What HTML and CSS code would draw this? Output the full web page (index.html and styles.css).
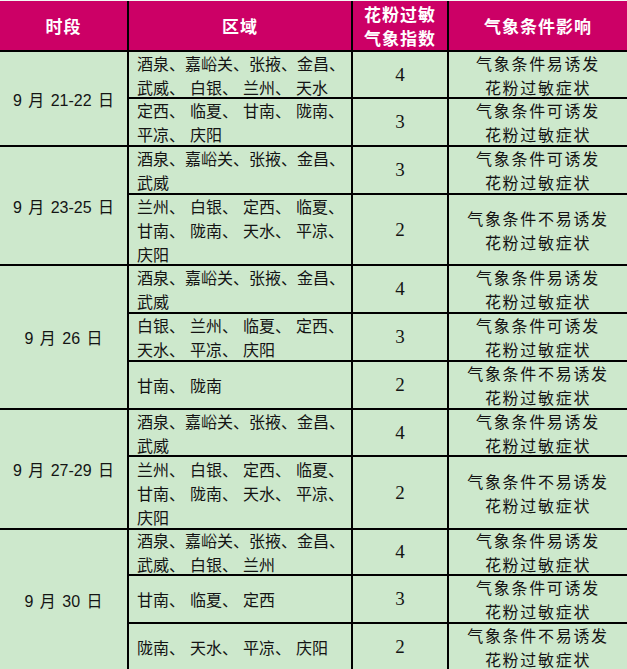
FILE: index.html
```html
<!DOCTYPE html>
<html lang="zh">
<head>
<meta charset="utf-8">
<link rel="stylesheet" href="styles.css">
</head>
<body>
<table class="grid">
  <colgroup>
    <col class="c-date"><col class="c-area"><col class="c-idx"><col class="c-eff">
  </colgroup>
  <thead>
    <tr class="h-head">
      <th><div class="t">时段</div></th>
      <th><div class="t">区域</div></th>
      <th><div class="t">花粉过敏<br>气象指数</div></th>
      <th><div class="t">气象条件影响</div></th>
    </tr>
  </thead>
  <tbody>
    <tr class="h47">
      <td class="date" rowspan="2">9 月 21-22 日</td>
      <td class="area"><div class="t">酒泉、嘉峪关、张掖、金昌、<br>武威<span class="d">、</span>白银<span class="d">、</span>兰州<span class="d">、</span>天水</div></td>
      <td class="idx">4</td>
      <td class="eff"><div class="t">气象条件易诱发<br>花粉过敏症状</div></td>
    </tr>
    <tr class="h48">
      <td class="area"><div class="t">定西<span class="d">、</span>临夏<span class="d">、</span>甘南<span class="d">、</span>陇南、<br>平凉<span class="d">、</span>庆阳</div></td>
      <td class="idx">3</td>
      <td class="eff"><div class="t">气象条件可诱发<br>花粉过敏症状</div></td>
    </tr>
    <tr class="h48">
      <td class="date" rowspan="2">9 月 23-25 日</td>
      <td class="area"><div class="t">酒泉、嘉峪关、张掖、金昌、<br>武威</div></td>
      <td class="idx">3</td>
      <td class="eff"><div class="t">气象条件可诱发<br>花粉过敏症状</div></td>
    </tr>
    <tr class="h71">
      <td class="area"><div class="t">兰州<span class="d">、</span>白银<span class="d">、</span>定西<span class="d">、</span>临夏、<br>甘南<span class="d">、</span>陇南<span class="d">、</span>天水<span class="d">、</span>平凉、<br>庆阳</div></td>
      <td class="idx">2</td>
      <td class="eff"><div class="t">气象条件不易诱发<br>花粉过敏症状</div></td>
    </tr>
    <tr class="h48">
      <td class="date" rowspan="3">9 月 26 日</td>
      <td class="area"><div class="t">酒泉、嘉峪关、张掖、金昌、<br>武威</div></td>
      <td class="idx">4</td>
      <td class="eff"><div class="t">气象条件易诱发<br>花粉过敏症状</div></td>
    </tr>
    <tr class="h48">
      <td class="area"><div class="t">白银<span class="d">、</span>兰州<span class="d">、</span>临夏<span class="d">、</span>定西、<br>天水<span class="d">、</span>平凉<span class="d">、</span>庆阳</div></td>
      <td class="idx">3</td>
      <td class="eff"><div class="t">气象条件可诱发<br>花粉过敏症状</div></td>
    </tr>
    <tr class="h48">
      <td class="area"><div class="t">甘南<span class="d">、</span>陇南</div></td>
      <td class="idx">2</td>
      <td class="eff"><div class="t">气象条件不易诱发<br>花粉过敏症状</div></td>
    </tr>
    <tr class="h47">
      <td class="date" rowspan="2">9 月 27-29 日</td>
      <td class="area"><div class="t">酒泉、嘉峪关、张掖、金昌、<br>武威</div></td>
      <td class="idx">4</td>
      <td class="eff"><div class="t">气象条件易诱发<br>花粉过敏症状</div></td>
    </tr>
    <tr class="h73">
      <td class="area"><div class="t">兰州<span class="d">、</span>白银<span class="d">、</span>定西<span class="d">、</span>临夏、<br>甘南<span class="d">、</span>陇南<span class="d">、</span>天水<span class="d">、</span>平凉、<br>庆阳</div></td>
      <td class="idx">2</td>
      <td class="eff"><div class="t">气象条件不易诱发<br>花粉过敏症状</div></td>
    </tr>
    <tr class="h46">
      <td class="date" rowspan="3">9 月 30 日</td>
      <td class="area"><div class="t">酒泉、嘉峪关、张掖、金昌、<br>武威<span class="d">、</span>白银<span class="d">、</span>兰州</div></td>
      <td class="idx">4</td>
      <td class="eff"><div class="t">气象条件易诱发<br>花粉过敏症状</div></td>
    </tr>
    <tr class="h48">
      <td class="area"><div class="t">甘南<span class="d">、</span>临夏<span class="d">、</span>定西</div></td>
      <td class="idx">3</td>
      <td class="eff"><div class="t">气象条件可诱发<br>花粉过敏症状</div></td>
    </tr>
    <tr class="h46">
      <td class="area"><div class="t">陇南<span class="d">、</span>天水<span class="d">、</span>平凉<span class="d">、</span>庆阳</div></td>
      <td class="idx">2</td>
      <td class="eff"><div class="t">气象条件不易诱发<br>花粉过敏症状</div></td>
    </tr>
  </tbody>
</table>
</body>
</html>
```

FILE: styles.css
```css
html, body {
  margin: 0;
  padding: 0;
  background: #f4f8f4;
}
body {
  padding-top: 1px;
  overflow: hidden;
  height: 668px;
}
.grid {
  width: 627px;
  table-layout: fixed;
  border-collapse: collapse;
  border-style: hidden;
  background: #cde8cc;
  font-family: "Noto Sans CJK SC", sans-serif;
  color: #141414;
}
.c-date { width: 128px; }
.c-area { width: 224px; }
.c-idx { width: 96px; }
.c-eff { width: 179px; }

.grid th, .grid td {
  border: 2px solid #000;
  padding: 0;
  vertical-align: middle;
  overflow: hidden;
}
.t {
  margin: -4px 0;
  line-height: 24px;
}
.grid th {
  background: #cc0066;
  color: #fff;
  font-size: 17px;
  font-weight: 700;
  letter-spacing: 1px;
  text-align: center;
}
.grid th .t { margin: -1px 0; }
.h-head { height: 50px; }
.h46 { height: 46px; }
.h47 { height: 47px; }
.h48 { height: 48px; }
.h71 { height: 71px; }
.h73 { height: 73px; }

.date {
  font-family: "Liberation Sans", "Noto Sans CJK SC", sans-serif;
  font-size: 16px;
  word-spacing: 2px;
  text-align: center;
  white-space: nowrap;
}
.grid td.area {
  font-size: 16px;
  padding-left: 8px;
  text-align: left;
  white-space: nowrap;
}
.d { margin-right: 5px; }
.idx {
  font-family: "Liberation Serif", serif;
  font-size: 19px;
  line-height: 20px;
  text-align: center;
}
.eff {
  font-size: 16px;
  letter-spacing: 1.7px;
  text-align: center;
  white-space: nowrap;
}
```
